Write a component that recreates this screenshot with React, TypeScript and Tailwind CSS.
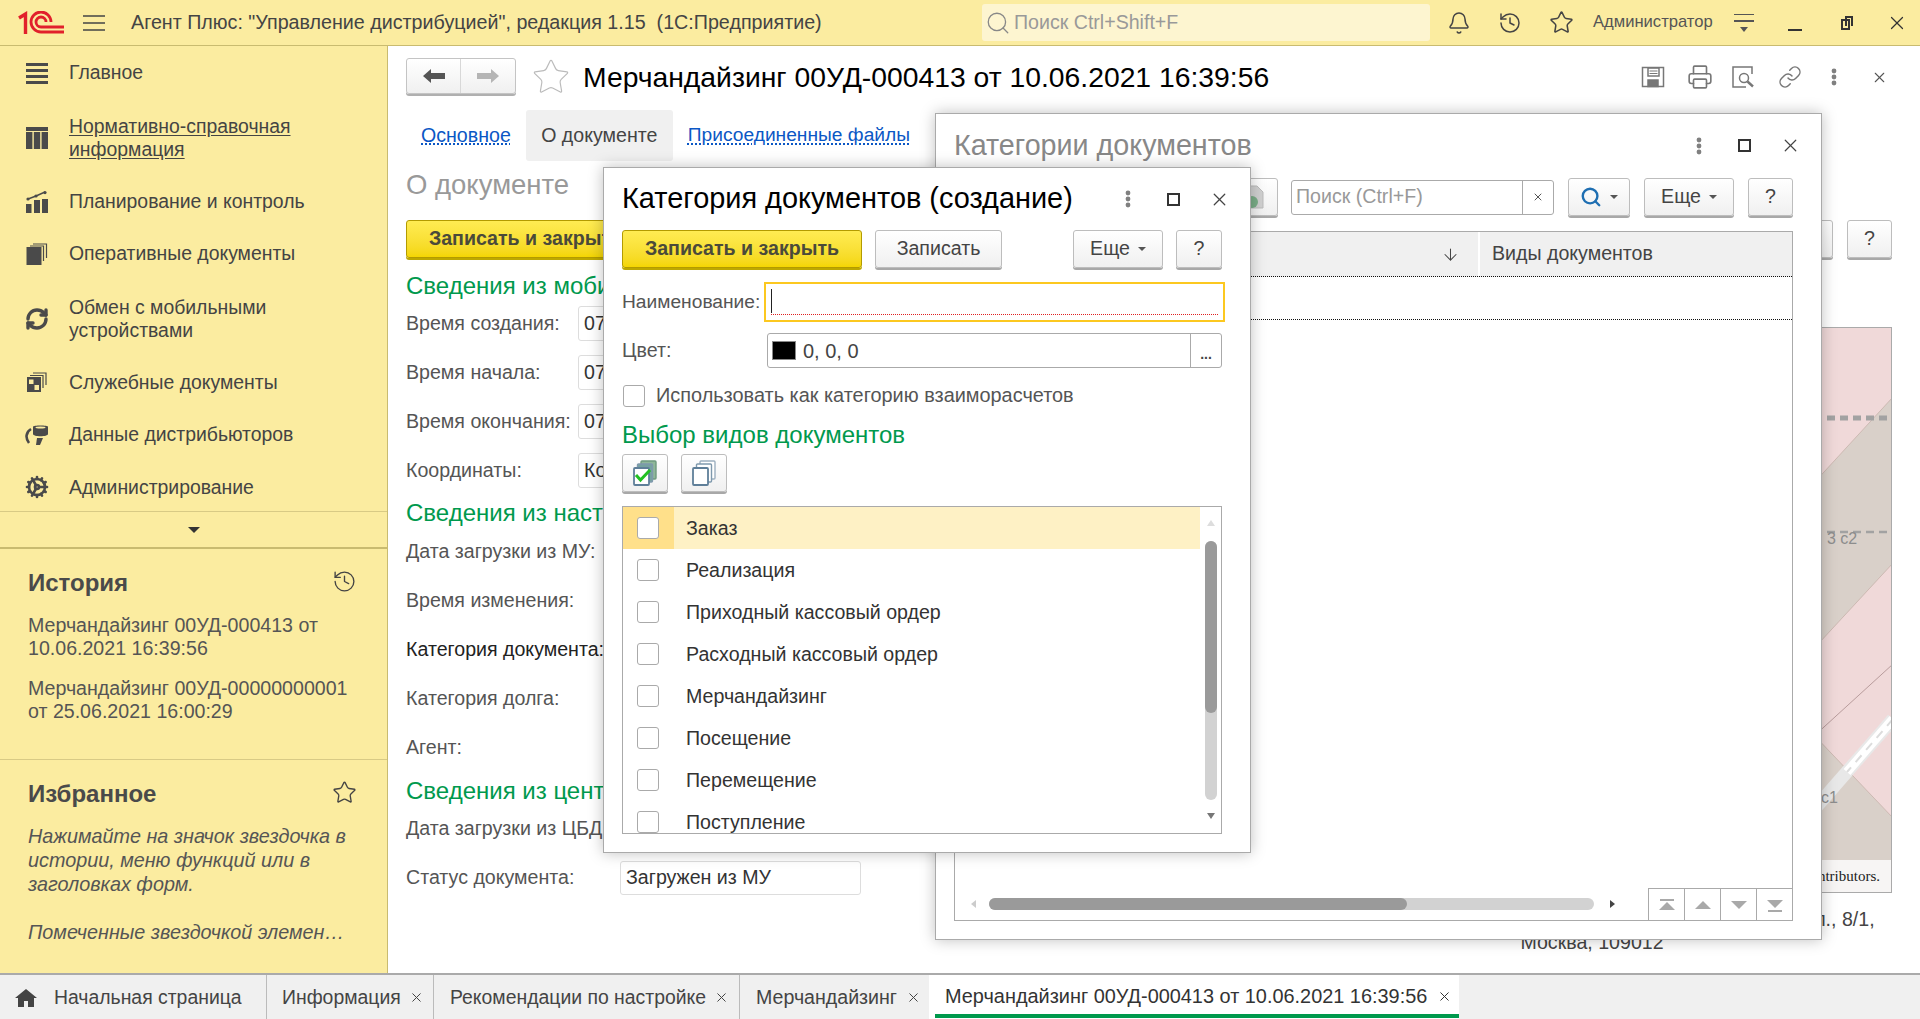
import React from "react";
import { Bell, History, Star, Search, Link as LinkIcon, Printer, RefreshCw, Cog, X, ArrowDown } from "lucide-react";

const Logo = () => (
  <svg width="46" height="24" viewBox="0 0 46 24" fill="none" stroke="#e1202b" strokeWidth="2.8">
    <path d="M1 7 L7.5 3 V23" strokeWidth="3.4" />
    <path d="M46 21 H23 A10 10 0 1 1 33 11" />
    <path d="M46 16 H23 A5 5 0 1 1 28 11" />
  </svg>
);

const Burger = () => (
  <svg width="22" height="16" viewBox="0 0 22 16" stroke="#444" strokeWidth="1.6">
    <path d="M0 1h22M0 8h22M0 15h22" />
  </svg>
);

const SIcon = ({ kind }: { kind: string }) => {
  const c = "#4a4a4a";
  if (kind === "main")
    return (
      <svg width="22" height="22" viewBox="0 0 22 22" fill={c}>
        <rect y="1" width="22" height="3" /><rect y="7" width="22" height="3" /><rect y="13" width="22" height="3" /><rect y="19" width="22" height="3" />
      </svg>
    );
  if (kind === "grid")
    return (
      <svg width="22" height="22" viewBox="0 0 22 22" fill={c}>
        <rect y="0" width="22" height="4" /><rect y="5" width="6.4" height="17" /><rect x="7.8" y="5" width="6.4" height="17" /><rect x="15.6" y="5" width="6.4" height="17" />
      </svg>
    );
  if (kind === "chart")
    return (
      <svg width="22" height="22" viewBox="0 0 22 22" fill={c}>
        <rect y="13" width="5.5" height="9" /><rect x="8" y="9" width="6" height="13" /><rect x="16" y="8" width="6" height="14" />
        <path d="M2 8 L10 5 L19 1" fill="none" stroke={c} strokeWidth="1.4" />
        <circle cx="2" cy="8" r="1.6" /><circle cx="10" cy="5" r="1.6" /><circle cx="19" cy="1.6" r="1.6" />
      </svg>
    );
  if (kind === "docs")
    return (
      <svg width="22" height="22" viewBox="0 0 22 22" fill="none" stroke={c}>
        <rect x="1" y="4.5" width="14" height="17" fill={c} />
        <path d="M4 3 H17.5 V18" strokeWidth="1.2" />
        <path d="M7 1 H20.5 V15" strokeWidth="1.2" />
      </svg>
    );
  if (kind === "svc")
    return (
      <svg width="20" height="20" viewBox="0 0 20 20" fill="none" stroke={c}>
        <rect x="0.5" y="5.5" width="13" height="14" fill={c} />
        <rect x="2" y="7.5" width="4.5" height="4.5" fill="#fbeca0" stroke="none" />
        <rect x="7.5" y="13" width="4.5" height="5" fill="#fbeca0" stroke="none" />
        <path d="M3 3.5 H16 V16" strokeWidth="1.2" />
        <path d="M6 1 H19 V13" strokeWidth="1.2" />
      </svg>
    );
  if (kind === "data")
    return (
      <svg width="24" height="20" viewBox="0 0 24 20" fill={c}>
        <path d="M8 1.5 C8 0 23 0 23 1.5 V9 C23 12 8 12 8 9 Z" />
        <ellipse cx="15.5" cy="2.5" rx="5" ry="1" fill="#fbeca0" />
        <path d="M6 4 C1 7 0 13 4 18" fill="none" stroke={c} strokeWidth="2.6" />
        <path d="M12 13 L18 13 L15 20 L11 20 Z" />
      </svg>
    );
  return null;
};

const Item = ({ icon, h, children, u }: { icon: React.ReactNode; h: string; children: React.ReactNode; u?: boolean }) => (
  <div className={`flex shrink-0 items-center ${h}`}>
    <div className="flex w-[69px] shrink-0 justify-center pl-[4px]">{icon}</div>
    <div className={`whitespace-nowrap text-[19.4px] leading-[23px] text-[#444] ${u ? "underline underline-offset-2" : ""}`}>{children}</div>
  </div>
);

const Btn = ({ children, cls = "" }: { children?: React.ReactNode; cls?: string }) => (
  <div className={`flex shrink-0 items-center justify-center rounded-[3px] border border-[#bdbdbd] bg-gradient-to-b from-white to-[#f0f0f0] text-[19.6px] text-[#444] shadow-[0_2px_0_#a8a8a8] ${cls}`}>
    {children}
  </div>
);

const YellowBtn = ({ cls = "", children }: { cls?: string; children: React.ReactNode }) => (
  <div className={`flex shrink-0 items-center whitespace-nowrap rounded-[3px] border border-[#b39b00] bg-gradient-to-b from-[#ffec52] to-[#f4d600] text-[19.6px] font-bold text-[#4a4a3a] shadow-[0_2px_0_#bda800] ${cls}`}>
    {children}
  </div>
);

const Caret = () => <span className="ml-[8px] inline-block h-0 w-0 border-x-[4px] border-t-[4px] border-x-transparent border-t-[#555]" />;

const Dots = ({ c = "#808080" }: { c?: string }) => (
  <svg width="6" height="18" viewBox="0 0 6 18" fill={c}>
    <circle cx="3" cy="3" r="2.4" /><circle cx="3" cy="9" r="2.4" /><circle cx="3" cy="15" r="2.4" />
  </svg>
);

const WinControls = () => (
  <div className="flex items-center">
    <Dots />
    <div className="ml-[36px] h-[13px] w-[13px] border-2 border-[#333]" />
    <X className="ml-[29px] text-[#444]" size={21} strokeWidth={1.4} />
  </div>
);

const Green = ({ children, cls = "" }: { children: React.ReactNode; cls?: string }) => (
  <div className={`whitespace-nowrap text-[24px] text-[#00994d] ${cls}`}>{children}</div>
);

const Field = ({ label, value, dark }: { label: string; value?: string; dark?: boolean }) => (
  <div className="flex h-[49px] items-center">
    <div className={`w-[172px] shrink-0 whitespace-nowrap text-[19.6px] ${dark ? "text-[#222]" : "text-[#555]"}`}>{label}</div>
    {value && (
      <div className="flex h-[35px] w-[200px] items-center rounded-[3px] border border-[#ddd] pl-[5px] text-[19.6px] text-[#333]">
        <span className="w-[20px] overflow-hidden whitespace-nowrap">{value}</span>
      </div>
    )}
  </div>
);

const Check = () => <div className="h-[22px] w-[22px] rounded-[3px] border border-[#aaa] bg-white" />;

const docKinds = ["Заказ", "Реализация", "Приходный кассовый ордер", "Расходный кассовый ордер", "Мерчандайзинг", "Посещение", "Перемещение", "Поступление"];

const Page = ({ path }: { path: string }) => (
  <svg width="22" height="22" viewBox="0 0 22 22" fill="#a9a9a9"><path d={path} /></svg>
);

function DocCheckIcon({ checked }: { checked?: boolean }) {
  return (
    <svg width="26" height="26" viewBox="0 0 26 26" fill="none">
      <rect x="9" y="1" width="15" height="18" rx="1" fill={checked ? "#8fb79a" : "#fff"} stroke={checked ? "#6f9a7f" : "#9db0c0"} strokeWidth="1.4" />
      <rect x="5.5" y="4" width="15" height="18" rx="1" fill={checked ? "#76a2a0" : "#fff"} stroke="#7f99ad" strokeWidth="1.4" />
      <rect x="2" y="8" width="15" height="17" rx="1" fill="#fff" stroke="#5f7f99" strokeWidth="1.8" />
      {checked && <path d="M4 15 L8.5 20 L18 10" stroke="#22c022" strokeWidth="3" />}
    </svg>
  );
}

function MapBox() {
  return (
    <div className="relative h-[566px] w-[600px] overflow-hidden border border-[#aaa]">
      <svg width="600" height="566" viewBox="1292 327 600 566" className="block">
        <rect x="1292" y="327" width="600" height="566" fill="#f0d9d9" />
        <polygon points="1892,396 1720,583 1720,748 1892,562" fill="#d9d0c9" stroke="#ccb9b2" />
        <path d="M1892 663 L1720 820" stroke="#b89c9c" strokeWidth="1" />
        <polygon points="1750,668 1892,817 1892,861 1750,861" fill="#d9d0c9" stroke="#ccb9b2" />
        <path d="M1892 718 L1790 835" stroke="#e8e8e8" strokeWidth="13" />
        <path d="M1892 718 L1846 771" stroke="#fff" strokeWidth="9" />
        <path d="M1892 718 L1846 771" stroke="#dcdcdc" strokeWidth="2" strokeDasharray="9 7" />
        <path d="M1800 417 H1892" stroke="#a2a2a2" strokeWidth="5" strokeDasharray="8 5" />
        <path d="M1800 531 H1892" stroke="#a2a2a2" strokeWidth="2.5" strokeDasharray="8 5" />
        <text x="1826" y="543" fontSize="16" fill="#8d8d8d" fontFamily="Liberation Sans">3 с2</text>
        <text x="1820" y="802" fontSize="16" fill="#8d8d8d" fontFamily="Liberation Sans">с1</text>
      </svg>
      <div className="absolute bottom-0 right-0 flex h-[32px] w-[600px] items-center justify-end bg-[#f7f5f4] pr-[11px] font-['Liberation_Serif',serif] text-[15px] text-[#222]">
        © OpenStreetMap contributors.
      </div>
    </div>
  );
}

export default function App() {
  return (
    <div className="relative flex h-[1019px] w-[1920px] flex-col overflow-hidden bg-white font-['Liberation_Sans',Arial,sans-serif]">
      {/* Top bar */}
      <header className="flex h-[46px] shrink-0 items-center border-b border-[#c9bb70] bg-[#fbeca0] pl-[18px]">
        <Logo />
        <div className="ml-[19px]"><Burger /></div>
        <div className="ml-[26px] w-[851px] whitespace-pre text-[19.7px] text-[#444]">Агент Плюс: "Управление дистрибуцией", редакция 1.15  (1С:Предприятие)</div>
        <div className="flex h-[37px] w-[448px] shrink-0 items-center rounded-[3px] bg-[#fdf5d0] pl-[3px] text-[19.6px] text-[#999]">
          <Search size={26} strokeWidth={1.2} className="text-[#888]" />
          <span className="ml-[3px]">Поиск Ctrl+Shift+F</span>
        </div>
        <Bell size={24} strokeWidth={1.5} className="ml-[17px] text-[#444]" />
        <History size={24} strokeWidth={1.5} className="ml-[27px] text-[#444]" />
        <Star size={25} strokeWidth={1.5} className="ml-[27px] text-[#444]" />
        <div className="ml-[19px] whitespace-nowrap text-[16.6px] text-[#555]">Администратор</div>
        <div className="ml-[21px] flex flex-col items-center gap-[5px]">
          <div className="h-[1.5px] w-[20px] bg-[#555]" />
          <div className="h-[1.5px] w-[20px] bg-[#555]" />
          <div className="h-0 w-0 border-x-[4px] border-t-[5px] border-x-transparent border-t-[#555]" />
        </div>
        <div className="ml-[34px] mt-[14px] h-[2px] w-[14px] bg-[#333]" />
        <div className="relative ml-[39px] h-[14px] w-[12px]">
          <div className="absolute bottom-0 left-0 h-[11px] w-[9px] border-2 border-[#333] bg-[#fbeca0]" />
          <div className="absolute right-0 top-0 h-[10px] w-[8px] border-x-2 border-t-2 border-[#333]" />
        </div>
        <X size={22} strokeWidth={1.3} className="ml-[33px] text-[#333]" />
      </header>

      <div className="flex min-h-0 flex-1">
        {/* Sidebar */}
        <aside className="flex w-[388px] shrink-0 flex-col border-r border-[#c9bb70] bg-[#fbeca0]">
          <nav className="flex h-[466px] shrink-0 flex-col border-b border-[#d8ca85]">
            <Item h="h-[53px]" icon={<SIcon kind="main" />}>Главное</Item>
            <Item h="h-[77px]" u icon={<SIcon kind="grid" />}>Нормативно-справочная<br />информация</Item>
            <Item h="h-[51px]" icon={<SIcon kind="chart" />}>Планирование и контроль</Item>
            <Item h="h-[53px]" icon={<SIcon kind="docs" />}>Оперативные документы</Item>
            <Item h="h-[78px]" icon={<RefreshCw size={24} strokeWidth={3.4} className="text-[#4a4a4a]" />}>Обмен с мобильными<br />устройствами</Item>
            <Item h="h-[48px]" icon={<SIcon kind="svc" />}>Служебные документы</Item>
            <Item h="h-[57px]" icon={<SIcon kind="data" />}>Данные дистрибьюторов</Item>
            <Item h="h-[48px]" icon={<Cog size={24} strokeWidth={2.6} className="text-[#4a4a4a]" />}>Администрирование</Item>
          </nav>
          <div className="flex h-[37px] shrink-0 items-center justify-center border-b-2 border-[#c9bb70]">
            <div className="h-0 w-0 border-x-[6px] border-t-[6px] border-x-transparent border-t-[#333]" />
          </div>
          <section className="h-[211px] shrink-0 border-b border-[#d8ca85] px-[28px] pt-[19px]">
            <div className="flex items-center justify-between pr-[2px]">
              <div className="text-[24px] font-bold leading-[30px] text-[#4a4a4a]">История</div>
              <History size={25} strokeWidth={1.3} className="mt-[-4px] text-[#444]" />
            </div>
            <div className="mt-[16px] whitespace-nowrap text-[19.6px] leading-[23px] text-[#555]">Мерчандайзинг 00УД-000413 от<br />10.06.2021 16:39:56</div>
            <div className="mt-[17px] whitespace-nowrap text-[19.6px] leading-[23px] text-[#555]">Мерчандайзинг 00УД-00000000001<br />от 25.06.2021 16:00:29</div>
          </section>
          <section className="flex-1 px-[28px] pt-[19px]">
            <div className="flex items-center justify-between pr-[2px]">
              <div className="text-[24px] font-bold leading-[30px] text-[#4a4a4a]">Избранное</div>
              <Star size={25} strokeWidth={1.3} className="mt-[-4px] text-[#444]" />
            </div>
            <div className="mt-[15px] whitespace-nowrap text-[19.8px] italic leading-[24px] text-[#555]">
              Нажимайте на значок звездочка в<br />истории, меню функций или в<br />заголовках форм.
            </div>
            <div className="mt-[24px] whitespace-nowrap text-[19.8px] italic leading-[24px] text-[#555]">Помеченные звездочкой элемен…</div>
          </section>
        </aside>

        {/* Main document */}
        <main className="min-w-0 flex-1 pl-[18px] pr-[28px]">
          <div className="flex h-[48px] items-end">
            <div className="flex h-[36px] w-[110px] rounded-[3px] border border-[#c4c4c4] bg-gradient-to-b from-white to-[#f0f0f0] shadow-[0_2px_0_#b0b0b0]">
              <div className="flex flex-1 items-center justify-center border-r border-[#d8d8d8]">
                <svg width="22" height="14" viewBox="0 0 22 14" fill="#555"><path d="M0 7 L8 0 V4 H22 V10 H8 V14 Z" /></svg>
              </div>
              <div className="flex w-[54px] items-center justify-center">
                <svg width="22" height="14" viewBox="0 0 22 14" fill="#b5b5b5"><path d="M22 7 L14 0 V4 H0 V10 H14 V14 Z" /></svg>
              </div>
            </div>
            <Star size={40} strokeWidth={0.7} className="ml-[15px] mb-[-3px] text-[#bbb]" />
            <div className="ml-[12px] flex-1 self-center whitespace-nowrap pt-[13px] text-[28.3px] leading-[32px] text-black">Мерчандайзинг 00УД-000413 от 10.06.2021 16:39:56</div>
            <div className="flex items-center gap-[22px] self-center pr-[4px] pt-[14px] text-[#777]">
              <svg width="24" height="22" viewBox="0 0 24 22" fill="none" stroke="#777" strokeWidth="1.5">
                <path d="M1.5 1.5 H22.5 V20.5 H1.5 Z" /><rect x="7" y="2" width="11" height="8" /><path d="M8.5 5h8M8.5 7.5h8" strokeWidth="1" /><rect x="7" y="14" width="10" height="6.5" fill="#777" />
              </svg>
              <Printer size={26} strokeWidth={1.5} className="mr-[-3px]" />
              <svg width="24" height="22" viewBox="0 0 24 22" fill="none" stroke="#777" strokeWidth="1.5">
                <path d="M20 8 V1 H1 V21 H14" /><circle cx="12" cy="12" r="4.5" /><path d="M15.5 15.5 L21 20.5" strokeWidth="2.4" />
              </svg>
              <LinkIcon size={24} strokeWidth={1.5} />
              <div className="ml-[7px]"><Dots /></div>
              <X size={17} strokeWidth={1.5} className="ml-[12px] text-[#555]" />
            </div>
          </div>

          <div className="flex">
            <div className="w-[700px] shrink-0">
              <div className="mt-[16px] flex h-[51px] items-center text-[19.6px]">
                <div className="ml-[15px] text-[#0b57c5] underline decoration-dotted underline-offset-2">Основное</div>
                <div className="ml-[15px] flex h-[51px] w-[147px] items-center justify-center rounded-[3px] bg-[#f0f0f0] text-[#444]">О документе</div>
                <div className="ml-[15px] whitespace-nowrap text-[19.2px] text-[#0b57c5] underline decoration-dotted underline-offset-2">Присоединенные файлы</div>
              </div>
              <div className="mt-[8px] text-[27.5px] leading-[32px] text-[#999]">О документе</div>
              <YellowBtn cls="mt-[19px] h-[38px] w-[240px] justify-center">Записать и закрыть</YellowBtn>
              <Green cls="mt-[14px] w-[197px] overflow-hidden leading-[28px]">Сведения из мобильного</Green>
              <div className="mt-[-1px]">
                <Field label="Время создания:" value="07:52:11" />
                <Field label="Время начала:" value="07:52:11" />
                <Field label="Время окончания:" value="07:54:34" />
                <Field label="Координаты:" value="Координаты" />
              </div>
              <Green cls="mt-[4px] w-[197px] overflow-hidden leading-[28px]">Сведения из настроек</Green>
              <div>
                <Field label="Дата загрузки из МУ:" />
                <Field label="Время изменения:" />
                <Field label="Категория документа:" dark />
                <Field label="Категория долга:" />
                <Field label="Агент:" />
              </div>
              <Green cls="mt-[5px] w-[197px] overflow-hidden leading-[28px]">Сведения из центральной</Green>
              <div className="mt-[-1px]">
                <Field label="Дата загрузки из ЦБД:" />
              </div>
              <div className="flex h-[49px] items-center">
                <div className="w-[214px] shrink-0 text-[19.6px] text-[#555]">Статус документа:</div>
                <div className="flex h-[34px] w-[241px] items-center rounded-[3px] border border-[#ddd] pl-[5px] text-[19.6px] text-[#333]">Загружен из МУ</div>
              </div>
            </div>
            <div className="ml-[186px] flex w-[600px] shrink-0 flex-col">
              <div className="mt-[125px] flex h-[40px] items-center justify-end gap-[14px]">
                <Btn cls="h-[38px] w-[80px]" />
                <Btn cls="h-[38px] w-[45px]">?</Btn>
              </div>
              <div className="mt-[68px]"><MapBox /></div>
              <div className="mt-[15px] whitespace-nowrap text-center text-[19.6px] leading-[23px] text-[#444]">Центральный федеральный округ, г. Москва, Солянка ул., 8/1,<br />Москва, 109012</div>
            </div>
          </div>
        </main>
      </div>

      {/* Tab bar */}
      <footer className="flex h-[46px] shrink-0 border-t-2 border-[#aaa] bg-[#f0f0f0] text-[19.6px] text-[#444]">
        <div className="flex w-[267px] items-center border-r border-[#bbb] pl-[15px] pt-[1px]">
          <svg width="22" height="18" viewBox="0 0 22 18" fill="#444"><path d="M11 0 L22 9 H19 V18 H13 V12 H9 V18 H3 V9 H0 Z" /></svg>
          <span className="ml-[17px] text-[19.4px]">Начальная страница</span>
        </div>
        <div className="flex w-[167px] items-center border-r border-[#bbb] pl-[15px] pt-[1px] text-[19.4px]">Информация<X size={15} strokeWidth={1.6} className="ml-[8px]" /></div>
        <div className="flex w-[306px] items-center whitespace-nowrap border-r border-[#bbb] pl-[16px] pt-[1px] text-[19.4px]">Рекомендации по настройке<X size={15} strokeWidth={1.6} className="ml-[8px]" /></div>
        <div className="flex w-[189px] items-center pl-[16px] pt-[1px]">Мерчандайзинг<X size={15} strokeWidth={1.6} className="ml-[9px]" /></div>
        <div className="flex w-[530px] flex-col bg-white text-[#333]">
          <div className="flex flex-1 items-center whitespace-nowrap pl-[16px] pt-[4px] text-[19.9px]">Мерчандайзинг 00УД-000413 от 10.06.2021 16:39:56<X size={15} strokeWidth={1.6} className="ml-[10px]" /></div>
          <div className="mb-[1px] ml-[6px] h-[4px] shrink-0 bg-[#00994d]" />
        </div>
      </footer>

      {/* Window: Категории документов */}
      <div className="absolute left-[935px] top-[113px] flex h-[827px] w-[887px] flex-col border border-[#aaa] bg-white pl-[18px] pr-[28px] shadow-[0_0_14px_rgba(0,0,0,0.25)]">
        <div className="flex h-[63px] items-center justify-between">
          <div className="text-[28.7px] text-[#888]">Категории документов</div>
          <div className="mr-[-8px]"><WinControls /></div>
        </div>
        <div className="flex h-[40px] items-center justify-end">
          <Btn cls="h-[38px] w-[45px] !justify-end pr-[12px]">
            <svg width="26" height="24" viewBox="0 0 26 24"><path d="M2 1 H18 L24 7 V23 H2 Z" fill="#d0d0d0" stroke="#bbb" /><circle cx="13" cy="17" r="6" fill="#7aad87" /></svg>
          </Btn>
          <div className="ml-[13px] flex h-[35px] w-[263px] rounded-[3px] border border-[#aaa] bg-white text-[19.6px] text-[#999]">
            <div className="flex flex-1 items-center border-r border-[#aaa] pl-[4px]">Поиск (Ctrl+F)</div>
            <div className="flex w-[30px] items-center justify-center"><X size={12} strokeWidth={2} className="text-[#555]" /></div>
          </div>
          <Btn cls="ml-[14px] h-[38px] w-[62px]"><Search size={22} strokeWidth={2.6} className="text-[#1f6fb2]" /><Caret /></Btn>
          <Btn cls="ml-[14px] h-[38px] w-[90px]">Еще<Caret /></Btn>
          <Btn cls="ml-[14px] h-[38px] w-[45px]">?</Btn>
        </div>
        <div className="mt-[14px] flex h-[690px] flex-col border border-[#aaa]">
          <div className="flex h-[45px] shrink-0 border-b border-dotted border-[#111] bg-[#f0f0f0] text-[19.6px] text-[#444]">
            <div className="flex flex-1 items-center justify-end border-r-2 border-white pr-[18px]"><ArrowDown size={19} strokeWidth={1.3} /></div>
            <div className="flex w-[312px] items-center pl-[12px]">Виды документов</div>
          </div>
          <div className="h-[43px] shrink-0 border-b border-dotted border-[#111]" />
          <div className="flex-1" />
          <div className="flex h-[32px] shrink-0 items-center">
            <div className="ml-[16px] h-0 w-0 border-y-[4px] border-r-[5px] border-y-transparent border-r-[#ccc]" />
            <div className="ml-[13px] h-[12px] w-[605px] rounded-full bg-[#d2d2d2]">
              <div className="h-[12px] w-[418px] rounded-full bg-[#9a9a9a]" />
            </div>
            <div className="ml-[16px] h-0 w-0 border-y-[4px] border-l-[5px] border-y-transparent border-l-[#444]" />
            <div className="ml-[33px] flex h-[32px] flex-1 border-l border-t border-[#aaa]">
              <div className="flex flex-1 items-center justify-center border-r border-[#aaa]"><Page path="M4 5h14v2H4zM11 8l8 8H3z" /></div>
              <div className="flex flex-1 items-center justify-center border-r border-[#aaa]"><Page path="M11 7l8 8H3z" /></div>
              <div className="flex flex-1 items-center justify-center border-r border-[#aaa]"><Page path="M3 7h16l-8 8z" /></div>
              <div className="flex flex-1 items-center justify-center"><Page path="M3 6h16l-8 8zM4 16h14v2H4z" /></div>
            </div>
          </div>
        </div>
      </div>

      {/* Window: Категория документов (создание) */}
      <div className="absolute left-[603px] top-[167px] flex h-[686px] w-[648px] flex-col border border-[#aaa] bg-white pl-[18px] pr-[28px] shadow-[0_0_14px_rgba(0,0,0,0.25)]">
        <div className="flex h-[62px] shrink-0 items-center justify-between">
          <div className="whitespace-nowrap pb-[1px] text-[28.9px] text-black">Категория документов (создание)</div>
          <div className="mr-[-8px]"><WinControls /></div>
        </div>
        <div className="flex h-[38px] shrink-0 items-center">
          <YellowBtn cls="h-[38px] w-[240px] justify-center">Записать и закрыть</YellowBtn>
          <Btn cls="ml-[13px] h-[38px] w-[127px]">Записать</Btn>
          <Btn cls="ml-auto h-[38px] w-[90px]">Еще<Caret /></Btn>
          <Btn cls="ml-[13px] h-[38px] w-[46px]">?</Btn>
        </div>
        <div className="mt-[14px] flex h-[40px] shrink-0 items-center">
          <div className="w-[142px] shrink-0 whitespace-nowrap text-[19.2px] text-[#555]">Наименование:</div>
          <div className="mr-[-3px] flex h-[40px] flex-1 flex-col justify-center border-2 border-[#fcc820] px-[5px]">
            <div className="h-[24px] w-[1px] bg-[#222]" />
            <div className="mt-[1px] border-b border-dotted border-[#e02020]" />
          </div>
        </div>
        <div className="mt-[11px] flex h-[35px] shrink-0 items-center">
          <div className="w-[145px] shrink-0 text-[19.6px] text-[#555]">Цвет:</div>
          <div className="flex h-[35px] flex-1 items-center rounded-[3px] border border-[#aaa] text-[20px] text-[#444]">
            <div className="ml-[4px] h-[19px] w-[24px] border border-[#888] bg-black" />
            <span className="ml-[7px] flex-1">0, 0, 0</span>
            <div className="flex h-full w-[31px] items-center justify-center border-l border-[#aaa] pt-[6px] text-[14px] font-bold leading-none">...</div>
          </div>
        </div>
        <div className="mt-[17px] flex h-[22px] shrink-0 items-center pl-[1px]">
          <Check />
          <span className="ml-[11px] whitespace-nowrap text-[19.9px] text-[#555]">Использовать как категорию взаиморасчетов</span>
        </div>
        <Green cls="mt-[14px] h-[28px] shrink-0 leading-[28px]">Выбор видов документов</Green>
        <div className="mt-[5px] flex shrink-0 gap-[13px]">
          <Btn cls="h-[38px] w-[46px]"><DocCheckIcon checked /></Btn>
          <Btn cls="h-[38px] w-[46px]"><DocCheckIcon /></Btn>
        </div>
        <div className="mt-[14px] flex h-[328px] shrink-0 overflow-hidden border border-[#aaa]">
          <div className="w-[577px] shrink-0">
            {docKinds.map((d, i) => (
              <div key={d} className={`flex h-[42px] shrink-0 items-center ${i === 0 ? "bg-[#fef1c5]" : ""}`}>
                <div className={`flex h-full w-[51px] items-center justify-center pr-[2px] ${i === 0 ? "bg-[#ffe08a]" : ""}`}><Check /></div>
                <span className="ml-[12px] pt-[1px] text-[19.6px] text-[#333]">{d}</span>
              </div>
            ))}
          </div>
          <div className="flex w-[21px] flex-col items-center pt-[13px]">
            <div className="h-0 w-0 border-x-[4px] border-b-[6px] border-x-transparent border-b-[#ddd]" />
            <div className="mt-[15px] h-[259px] w-[12px] rounded-full bg-[#d2d2d2]">
              <div className="h-[172px] w-[12px] rounded-full bg-[#9a9a9a]" />
            </div>
            <div className="mt-[13px] h-0 w-0 border-x-[4px] border-t-[6px] border-x-transparent border-t-[#777]" />
          </div>
        </div>
      </div>
    </div>
  );
}
